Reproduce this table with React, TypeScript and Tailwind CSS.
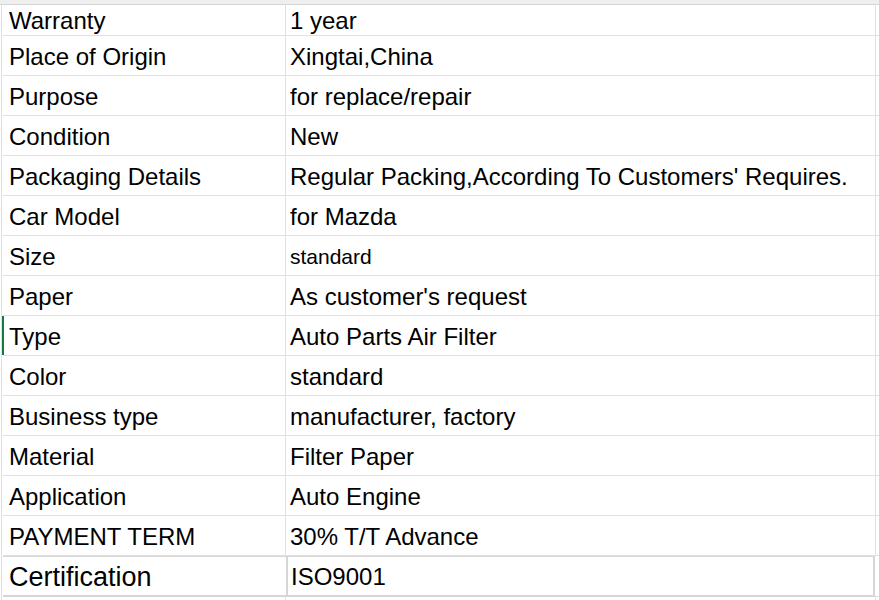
const ROWS: { label: string; value: string; valueClass?: string }[] = [
  { label: "Place of Origin", value: "Xingtai,China" },
  { label: "Purpose", value: "for replace/repair" },
  { label: "Condition", value: "New" },
  { label: "Packaging Details", value: "Regular Packing,According To Customers' Requires." },
  { label: "Car Model", value: "for Mazda" },
  { label: "Size", value: "standard", valueClass: "text-[21px] pb-[8px]" },
  { label: "Paper", value: "As customer's request" },
  { label: "Type", value: "Auto Parts Air Filter" },
  { label: "Color", value: "standard" },
  { label: "Business type", value: "manufacturer, factory" },
  { label: "Material", value: "Filter Paper" },
  { label: "Application", value: "Auto Engine" },
  { label: "PAYMENT TERM", value: "30% T/T Advance" },
];

export default function App() {
  return (
    <div className="h-[600px] w-[879px] overflow-hidden bg-white font-['Liberation_Sans',Arial,sans-serif] text-[24px] leading-none text-black">
      {/* top strip */}
      <div className="h-[4px] border-b border-[#d6d6d6] bg-[#efefef] box-content" />

      <div className="border-l border-[#e1e1e1] ml-[1px] pl-[1px]">
        {/* first row, partly scrolled out */}
        <div className="grid h-[31px] grid-cols-[283px_590px_1fr] border-b border-[#e1e1e1]">
          <div className="flex items-end border-r border-[#e1e1e1] pb-[2px] pl-[6px]">Warranty</div>
          <div className="flex items-end border-r border-[#e1e1e1] pb-[2px] pl-[4px]">1 year</div>
          <div />
        </div>

        {ROWS.map((row) => (
          <div
            key={row.label}
            className="relative grid h-[40px] grid-cols-[283px_590px_1fr] border-b border-[#e1e1e1]"
          >
            {row.label === "Type" && (
              <span className="absolute -left-[1px] top-0 h-[39px] w-[2px] bg-[#107c41]" />
            )}
            <div className="flex items-end border-r border-[#e1e1e1] pb-[6px] pl-[6px]">{row.label}</div>
            <div className={`flex items-end border-r border-[#e1e1e1] pl-[4px] ${row.valueClass ?? "pb-[6px]"}`}>
              {row.value}
            </div>
            <div />
          </div>
        ))}

        {/* certification row with the heavier box */}
        <div className="-mt-[1px] grid h-[42px] grid-cols-[283px_589px_1fr]">
          <div className="flex items-end border-y-2 border-[#d6d6d6] pb-[4px] pl-[6px] text-[27px]">Certification</div>
          <div className="flex items-end border-2 border-[#d6d6d6] pb-[6px] pl-[3px]">ISO9001</div>
          <div className="border-b border-[#e1e1e1]" />
        </div>
        <div className="grid h-[10px] grid-cols-[283px_590px_1fr]">
          <div className="border-r border-[#e1e1e1]" />
          <div className="border-r border-[#e1e1e1]" />
          <div />
        </div>
      </div>
    </div>
  );
}
